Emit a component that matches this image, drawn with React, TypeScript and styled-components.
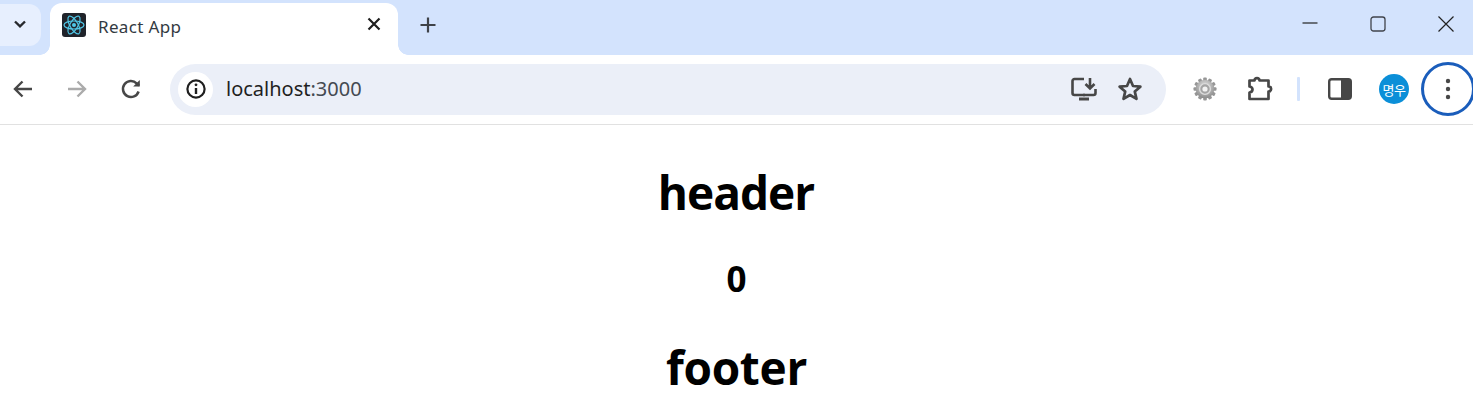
import React from "react";
import styled, { createGlobalStyle } from "styled-components";

const Global = createGlobalStyle`
  html, body { margin: 0; padding: 0; background: #fff; overflow: hidden; }
  body { font-family: "Noto Sans", "Noto Sans CJK KR", sans-serif; }
`;
const Page = styled.div`width: 1473px; height: 410px; display: flex; flex-direction: column; overflow: hidden;`;
const TabStrip = styled.div`height: 55px; background: #d3e3fd; display: flex; align-items: flex-start; flex: none;`;
const TabSearch = styled.button`
  width: 41px; height: 42px; margin-top: 4px; border: 0; padding: 0 2px 2px 0; background: #e7effe;
  border-radius: 0 12px 12px 0; display: flex; align-items: center; justify-content: center;
`;
const Tab = styled.div`
  position: relative; width: 348px; height: 52px; margin: 3px 0 0 9px; background: #fff;
  border-radius: 12px 12px 0 0; display: flex; align-items: center; padding: 0 17px 8px 12px; box-sizing: border-box;
  &::before, &::after { content: ""; position: absolute; bottom: 0; width: 10px; height: 10px; }
  &::before { left: -10px; background: radial-gradient(circle at 0 0, #d3e3fd 9.5px, #fff 10px); }
  &::after { right: -10px; background: radial-gradient(circle at 100% 0, #d3e3fd 9.5px, #fff 10px); }
`;
const TabTitle = styled.span`
  margin: 3px 0 0 12px; flex: 1; font-family: "Noto Sans", sans-serif; font-size: 17px; letter-spacing: 0.35px; color: #333a42;
`;
const PlainButton = styled.button`
  border: 0; padding: 0; background: none; display: flex; align-items: center; justify-content: center; flex: none;
`;
const NewTab = styled(PlainButton)`width: 24px; height: 24px; margin: 13px 0 0 18px;`;
const Spacer = styled.div`flex: 1;`;
const WindowControls = styled.div`display: flex; height: 48px; align-items: center;`;
const WindowButton = styled(PlainButton)`width: 68px; height: 48px; &:last-child { width: 54px; margin-left: 7px; }`;
const Toolbar = styled.div`
  height: 70px; box-sizing: border-box; border-bottom: 1px solid #e1e1e1; background: #fff; display: flex; align-items: center;
  padding-bottom: 1px; flex: none;
`;
const NavGroup = styled.div`display: flex; align-items: center; gap: 30px; padding-left: 11px; width: 170px; box-sizing: border-box; flex: none;`;
const Omnibox = styled.div`
  width: 996px; height: 51px; background: #ebeff8; border-radius: 26px; display: flex; align-items: center; box-sizing: border-box; padding: 0 23px 0 8px; flex: none;
`;
const InfoChip = styled.div`
  width: 35px; height: 35px; border-radius: 50%; background: #fff; display: flex; align-items: center; justify-content: center; flex: none;
`;
const Url = styled.div`margin-left: 13px; flex: 1; font-family: "Noto Sans", sans-serif; font-size: 20px; line-height: 24px; color: #1f1f1f; span { color: #444a52; }`;
const OmniActions = styled.div`display: flex; gap: 19px; align-items: center;`;
const ToolIcons = styled.div`display: flex; align-items: center; flex: none;`;
const GearSlot = styled.span`display: flex; margin: 0 30px 0 27px;`;
const Divider = styled.div`width: 3px; height: 24px; background: #d3e3fd; margin: 0 28px 0 24px; border-radius: 1px;`;
const Avatar = styled.div`
  width: 30px; height: 30px; border-radius: 50%; background: #0b8fd8; color: #fff; font-family: "Noto Sans CJK KR", sans-serif;
  font-size: 13px; letter-spacing: -0.5px; display: flex; align-items: center; justify-content: center; margin-left: 27px; flex: none;
`;
const MenuButton = styled.div`
  width: 54px; height: 54px; border-radius: 50%; border: 3px solid #1a5dbb; box-sizing: border-box; margin-left: 12px;
  display: flex; align-items: center; justify-content: center; flex: none;
`;
const Content = styled.main`text-align: center; color: #000; font-family: "Open Sans", sans-serif; font-weight: 700;`;
const Title = styled.h1<{ $tight?: boolean }>`font-size: 46px; line-height: 60px; margin: 0; letter-spacing: ${(p) => (p.$tight ? "-1px" : "-0.3px")};`;
const HeaderTitle = styled(Title)`padding-top: 37px; padding-right: 1px;`;
const Count = styled.h2`font-size: 35px; line-height: 44px; margin: 35px 0 36px;`;

const ReactLogo = () => (
  <svg width="24" height="24" viewBox="0 0 24 24">
    <rect width="24" height="24" rx="3" fill="#20232a" />
    <g fill="none" stroke="#50c8e8" strokeWidth="1.2">
      <ellipse cx="12" cy="12" rx="10" ry="4" />
      <ellipse cx="12" cy="12" rx="10" ry="4" transform="rotate(60 12 12)" />
      <ellipse cx="12" cy="12" rx="10" ry="4" transform="rotate(120 12 12)" />
    </g>
    <circle cx="12" cy="12" r="2" fill="#50c8e8" />
  </svg>
);

const Gear = () => {
  const teeth = Array.from({ length: 12 }, (_, i) => i * 30);
  return (
    <svg width="24" height="24" viewBox="0 0 24 24">
      <defs>
        <radialGradient id="gearFill" cx="50%" cy="35%" r="70%">
          <stop offset="0" stopColor="#e4e4e4" />
          <stop offset="1" stopColor="#858585" />
        </radialGradient>
      </defs>
      {teeth.map((a) => (
        <rect key={a} x="10.2" y="0.5" width="3.6" height="5" rx="1" fill="#969696" transform={`rotate(${a} 12 12)`} />
      ))}
      <circle cx="12" cy="12" r="9.3" fill="url(#gearFill)" />
      <circle cx="12" cy="12" r="5.4" fill="#a4a4a4" stroke="#dcdcdc" strokeWidth="1.4" />
      <circle cx="12" cy="12" r="2.6" fill="#f2f2f2" />
    </svg>
  );
};

export default function App() {
  return (
    <Page>
      <Global />
      <TabStrip>
        <TabSearch aria-label="tabs">
          <svg width="16" height="16" viewBox="0 0 16 16" fill="none" stroke="#27292d" strokeWidth="2.4"><path d="M3 5.5 8 10.3 13 5.5" /></svg>
        </TabSearch>
        <Tab>
          <ReactLogo />
          <TabTitle>React App</TabTitle>
          <svg width="14" height="14" viewBox="0 0 14 14" stroke="#1f1f1f" strokeWidth="2.2" style={{ marginTop: -2 }}><path d="M1.5 1.5 12.5 12.5M12.5 1.5 1.5 12.5" /></svg>
        </Tab>
        <NewTab aria-label="new tab">
          <svg width="18" height="18" viewBox="0 0 18 18" stroke="#3e4248" strokeWidth="2.2"><path d="M9 1.5V16.5M1.5 9H16.5" /></svg>
        </NewTab>
        <Spacer />
        <WindowControls>
          <WindowButton aria-label="minimize">
            <svg width="16" height="16" viewBox="0 0 16 16" stroke="#222" strokeWidth="1.2"><path d="M0.5 7H15.5" /></svg>
          </WindowButton>
          <WindowButton aria-label="maximize">
            <svg width="16" height="16" viewBox="0 0 16 16" fill="none" stroke="#40444c" strokeWidth="1.3"><rect x="1" y="1" width="14" height="14" rx="2.5" /></svg>
          </WindowButton>
          <WindowButton aria-label="close">
            <svg width="16" height="16" viewBox="0 0 16 16" stroke="#222" strokeWidth="1.2"><path d="M0.5 0.5 15.5 15.5M15.5 0.5 0.5 15.5" /></svg>
          </WindowButton>
        </WindowControls>
      </TabStrip>
      <Toolbar>
        <NavGroup>
          <PlainButton aria-label="back">
            <svg width="24" height="24" viewBox="0 0 24 24" fill="none" stroke="#474747" strokeWidth="2.4"><path d="M21 12H4M11.5 4.5 4 12l7.5 7.5" /></svg>
          </PlainButton>
          <PlainButton aria-label="forward">
            <svg width="24" height="24" viewBox="0 0 24 24" fill="none" stroke="#ababab" strokeWidth="2.4"><path d="M3 12H20M12.5 4.5 20 12l-7.5 7.5" /></svg>
          </PlainButton>
          <PlainButton aria-label="reload">
            <svg width="24" height="24" viewBox="0 0 24 24" fill="none" stroke="#474747" strokeWidth="2.5"><path d="M19.6 14.5A8 8 0 1 1 17.6 6.3L20 8.6" /><path d="M20.8 3v6.6h-6.6" fill="#474747" stroke="none" /></svg>
          </PlainButton>
        </NavGroup>
        <Omnibox>
          <InfoChip>
            <svg width="22" height="22" viewBox="0 0 22 22" fill="none" stroke="#1f1f1f"><circle cx="11" cy="11" r="8.6" strokeWidth="2.2" /><path d="M11 10v6" strokeWidth="2.4" /><circle cx="11" cy="6.8" r="1.4" fill="#1f1f1f" stroke="none" /></svg>
          </InfoChip>
          <Url>localhost<span>:3000</span></Url>
          <OmniActions>
            <svg width="28" height="26" viewBox="0 0 28 26" fill="none" stroke="#474747" strokeWidth="2.6">
              <path d="M14 3H4.5A2 2 0 0 0 2.5 5v12a2 2 0 0 0 2 2h19a2 2 0 0 0 2-2v-4" />
              <path d="M20 2v10M15.5 8l4.5 4.5L24.5 8" />
              <path d="M9 23h10" strokeWidth="3" />
              <path d="M13 19h2" />
            </svg>
            <svg width="26" height="26" viewBox="0 0 26 26" fill="none" stroke="#474747" strokeWidth="2.7" strokeLinejoin="round"><path d="M13 3l3 7 7.4.7-5.6 4.9 1.7 7.3-6.5-3.9-6.5 3.9 1.7-7.3-5.6-4.9L10 10z" /></svg>
          </OmniActions>
        </Omnibox>
        <ToolIcons>
          <GearSlot><Gear /></GearSlot>
          <svg width="26" height="26" viewBox="0 0 26 26" fill="none" stroke="#474747" strokeWidth="2.7" strokeLinejoin="round">
            <path d="M2.5 4.5H7.5C7.8 1.2 12.2 1.2 12.5 4.5H21.5V10.5C25 10.5 25 15.5 21.5 15.5V23H2.5V16.5C6.5 15.8 6.5 11.2 2.5 10.5Z" />
          </svg>
          <Divider />
          <svg width="24" height="22" viewBox="0 0 24 22"><rect x="1.2" y="1.2" width="21.6" height="19.6" rx="2.5" fill="#fff" stroke="#474747" strokeWidth="2.4" /><path d="M13 1.2h7.3a2.5 2.5 0 0 1 2.5 2.5v14.6a2.5 2.5 0 0 1-2.5 2.5H13z" fill="#474747" /></svg>
          <Avatar>명우</Avatar>
          <MenuButton>
            <svg width="6" height="24" viewBox="0 0 6 24" fill="#474747"><circle cx="3" cy="4" r="2.2" /><circle cx="3" cy="12" r="2.2" /><circle cx="3" cy="20" r="2.2" /></svg>
          </MenuButton>
        </ToolIcons>
      </Toolbar>
      <Content>
        <HeaderTitle $tight>header</HeaderTitle>
        <Count>0</Count>
        <Title>footer</Title>
      </Content>
    </Page>
  );
}
